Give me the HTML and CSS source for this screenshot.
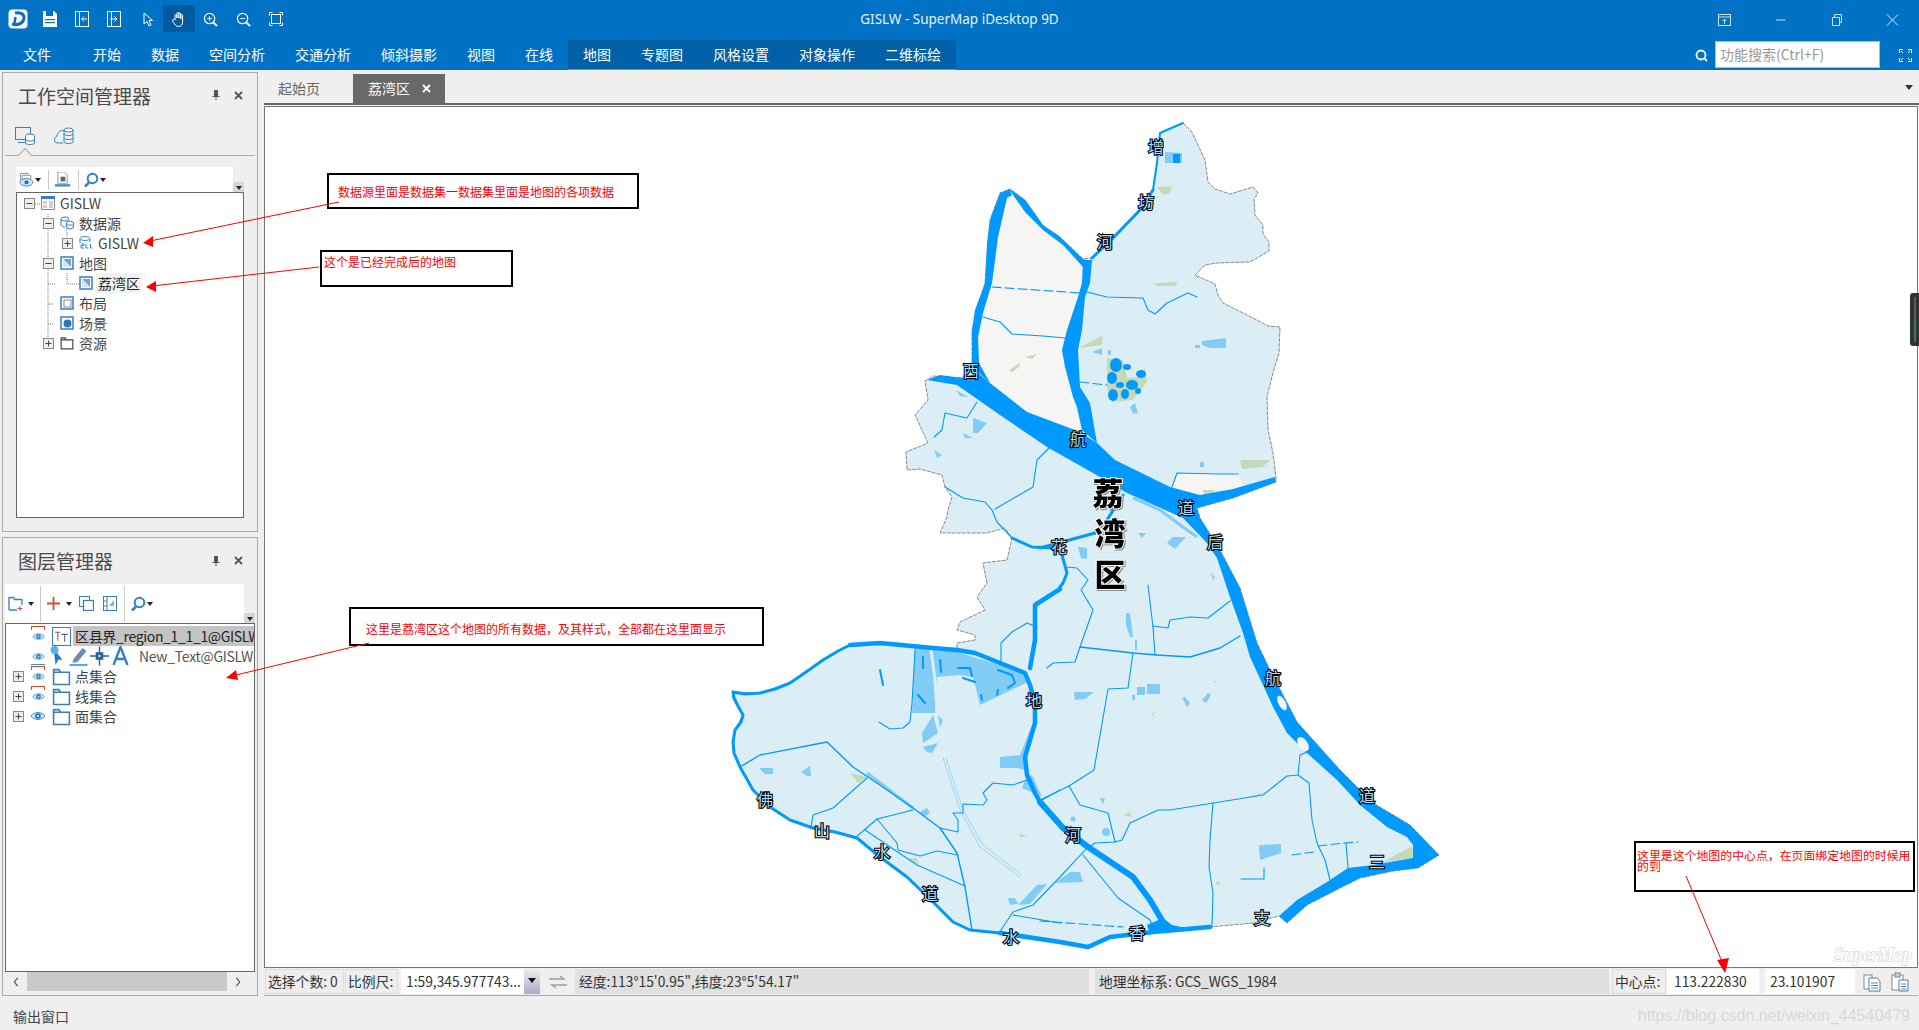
FILE: index.html
```html
<!DOCTYPE html>
<html lang="zh-CN">
<head>
<meta charset="utf-8">
<title>GISLW - SuperMap iDesktop 9D</title>
<link rel="stylesheet" href="styles.css">
</head>
<body>
<svg class="defs" width="0" height="0" aria-hidden="true">
  <symbol id="i-folder" viewBox="0 0 18 18"><path d="M1.5 16.5V2.5h5l1.5 2.5h8.5v11.500zM1.500 5h6.500" fill="none" stroke="currentColor" stroke-width="1.500"/></symbol>
  <symbol id="i-eye" viewBox="0 0 16 10"><path d="M1 5c3-4.500 11-4.500 14 0-3 4.500-11 4.500-14 0z" fill="#cfe6f7" stroke="#3a8bd0"/><circle cx="8" cy="5" r="2.800" fill="#1d76c2"/><circle cx="8" cy="5" r="1" fill="#fff"/></symbol>
  <symbol id="i-map" viewBox="0 0 14 14"><rect x="1" y="1" width="12" height="12" fill="#fff" stroke="#3a7ec0" stroke-width="1.500"/><path d="M3 3h8v8z" fill="#6aa6dc"/><path d="M3 3l8 8H3z" fill="#cfe3f5"/></symbol>
  <symbol id="i-plus" viewBox="0 0 11 11"><rect x=".5" y=".5" width="10" height="10" fill="#eee" stroke="#888"/><path d="M2.500 5.500h6M5.500 2.500v6" stroke="#444"/></symbol>
  <symbol id="i-minus" viewBox="0 0 11 11"><rect x=".5" y=".5" width="10" height="10" fill="#eee" stroke="#888"/><path d="M2.500 5.500h6" stroke="#444"/></symbol>
  <symbol id="i-search" viewBox="0 0 16 16"><circle cx="9.500" cy="6.500" r="4.800" fill="none" stroke="#3a7ec0" stroke-width="2"/><path d="M6 10.500l-4 4" stroke="#3a7ec0" stroke-width="2.500"/></symbol>
  <symbol id="i-doc" viewBox="0 0 18 20"><path d="M1 3h8v14H1z" fill="#fff" stroke="#7a8a9a"/><path d="M6 6h8l3 3v10H6z" fill="#fff" stroke="#5a7a9a"/><path d="M8 11h7M8 13.500h7M8 16h7" stroke="#3a8bd0"/></symbol>
</svg>

<header class="titlebar">
  <div class="qat">
    <svg class="logo" viewBox="0 0 20 20"><rect x="0.500" y="0.500" width="19" height="19" rx="4" fill="#fff"/><path d="M4 15c4 1 11 1 12-6 .5-4-4-6-9-5" fill="none" stroke="#0a6fc0" stroke-width="3"/><path d="M7.500 8l-1 6" stroke="#0a6fc0" stroke-width="2.500"/></svg>
    <svg class="qi save" viewBox="0 0 14 16"><path d="M0 0h11l3 3v13H0z" fill="#fff"/><rect x="3" y="0" width="7" height="5" fill="#0072c6"/><rect x="2" y="8" width="10" height="1.200" fill="#0072c6"/><rect x="2" y="11" width="10" height="1.200" fill="#0072c6"/></svg>
    <svg class="qi imp" viewBox="0 0 14 16"><rect x=".5" y=".5" width="13" height="15" fill="none" stroke="#fff"/><path d="M4.500 0v16M12 8H7m2-2.500L6.500 8 9 10.500" fill="none" stroke="#fff"/></svg>
    <svg class="qi exp" viewBox="0 0 14 16"><rect x=".5" y=".5" width="13" height="15" fill="none" stroke="#fff"/><path d="M4.500 0v16M3 8h7M7.500 5.500L10 8l-2.500 2.500" fill="none" stroke="#fff"/></svg>
    <svg class="qi cur" viewBox="0 0 10 15"><path d="M1 1v11l3-2.500 2 4.500 2-1-2-4.500h3.500z" fill="none" stroke="#fff"/></svg>
    <span class="hand-box"><svg class="hand" viewBox="0 0 14 16"><path d="M3 9V4.500c0-1.500 1.800-1.500 1.800 0V7 2.500c0-1.500 2-1.500 2 0V7 3c0-1.500 2-1.500 2 0v5-3.500c0-1.300 1.800-1.300 1.800 0V11c0 3-2 4.500-4 4.500-3 0-3.500-2-6-5.500-.8-1.500 1-2 2.400-1z" fill="none" stroke="#fff"/></svg></span>
    <svg class="qi zi" viewBox="0 0 16 16"><circle cx="7" cy="7" r="5.500" fill="none" stroke="#fff" stroke-width="1.300"/><path d="M4.500 7h5M7 4.500v5" stroke="#fff"/><path d="M11 11l4 4" stroke="#fff" stroke-width="2"/></svg>
    <svg class="qi zo" viewBox="0 0 16 16"><circle cx="7" cy="7" r="5.500" fill="none" stroke="#fff" stroke-width="1.300"/><path d="M4.500 7h5" stroke="#fff"/><path d="M11 11l4 4" stroke="#fff" stroke-width="2"/></svg>
    <svg class="qi fe" viewBox="0 0 14 14"><path d="M.5 3.500v-3h3M10.500.5h3v3M13.500 10.500v3h-3M3.500 13.500h-3v-3" fill="none" stroke="#fff"/><rect x="2.500" y="2.500" width="9" height="9" fill="none" stroke="#fff"/></svg>
  </div>
  <div class="app-title">GISLW - SuperMap iDesktop 9D</div>
  <div class="winctl">
    <svg class="wc" viewBox="0 0 13 12"><rect x=".5" y=".5" width="12" height="11" fill="none" stroke="#cfe0ee"/><path d="M0 3h13M6.500 10V5M4.500 7l2-2 2 2" fill="none" stroke="#cfe0ee"/></svg>
    <svg class="wc" viewBox="0 0 13 12"><path d="M2 6h9" stroke="#cfe0ee"/></svg>
    <svg class="wc" viewBox="0 0 13 12"><path d="M2.500 3.500h7v8h-7zM4.500 3V.5h7v8h-2" fill="none" stroke="#cfe0ee"/></svg>
    <svg class="wc" viewBox="0 0 13 12"><path d="M1 .5l11 11M12 .5l-11 11" stroke="#dce8f2"/></svg>
  </div>
</header>

<nav class="ribbon">
  <span class="tab-item first">文件</span>
  <span class="tab-item second">开始</span>
  <span class="tab-item">数据</span>
  <span class="tab-item">空间分析</span>
  <span class="tab-item">交通分析</span>
  <span class="tab-item">倾斜摄影</span>
  <span class="tab-item">视图</span>
  <span class="tab-item">在线</span>
  <div class="context-tabs">
    <span class="tab-item">地图</span>
    <span class="tab-item">专题图</span>
    <span class="tab-item">风格设置</span>
    <span class="tab-item">对象操作</span>
    <span class="tab-item">二维标绘</span>
  </div>
  <div class="ribbon-right">
    <svg class="rs-icon" viewBox="0 0 13 13"><circle cx="6" cy="6" r="4.500" fill="none" stroke="#fff" stroke-width="1.800"/><path d="M9 9l3 3" stroke="#fff" stroke-width="1.800"/></svg>
    <div class="search-box">功能搜索(Ctrl+F)</div>
    <svg class="fs-icon" viewBox="0 0 13 13"><path d="M0 .5h4M.5 0v4M2 2l2 2M9 .5h4M12.500 0v4M11 2L9 4M0 12.500h4M.5 9v4M2 11l2-2M9 12.500h4M12.500 9v4M11 11L9 9" fill="none" stroke="#fff"/></svg>
  </div>
</nav>

<main class="workspace">
  <aside class="side">
    <section class="panel panel-ws">
      <div class="panel-head">
        <h2 class="panel-title">工作空间管理器</h2>
        <svg class="pin" viewBox="0 0 8 10"><path d="M2 0h4v6h1.500v1h-3v3h-1V7h-3V6H2z" fill="#555"/></svg>
        <svg class="close" viewBox="0 0 9 9"><path d="M1 1l7 7M8 1L1 8" stroke="#555" stroke-width="1.800"/></svg>
      </div>
      <div class="ws-tabs">
        <svg class="ws-ico" viewBox="0 0 20 18"><rect x=".5" y=".5" width="15" height="12" fill="none" stroke="#3a7ec0"/><path d="M3 15.500h8" stroke="#3a7ec0"/><ellipse cx="15" cy="9" rx="4.500" ry="2" fill="#fff" stroke="#3a7ec0"/><path d="M10.500 9v7c0 2 9 2 9 0V9M10.500 12.500c0 2 9 2 9 0" fill="#fff" stroke="#3a7ec0"/></svg>
        <svg class="ws-ico" viewBox="0 0 20 18"><path d="M9 16H4c-5 0-4-6-1-7 0-4 5-7 8-5" fill="none" stroke="#3a7ec0"/><ellipse cx="14.500" cy="3" rx="4.500" ry="2" fill="#fff" stroke="#3a7ec0"/><path d="M10 3v12c0 2 9 2 9 0V3M10 7c0 2 9 2 9 0M10 11c0 2 9 2 9 0" fill="none" stroke="#3a7ec0"/></svg>
        <i class="notch"></i>
      </div>
      <div class="toolbar tb-ws">
        <svg class="tb-ico w15" viewBox="0 0 16 16"><path d="M1.500 9V1.500h9M3.500 10V3.500h9v4" fill="none" stroke="#888"/><ellipse cx="8" cy="11" rx="7" ry="4" fill="#cfe6f7" stroke="#3a8bd0"/><circle cx="8" cy="11" r="2.200" fill="#1d76c2"/></svg>
        <i class="caret ml1"></i>
        <i class="tb-sep ml7"></i>
        <svg class="tb-ico w15 ml6" viewBox="0 0 16 16"><path d="M3 0h7l3 3v9H3z" fill="#fff" stroke="#8a9ab0"/><rect x="6" y="5" width="5" height="5" fill="#666"/><rect x="0" y="13" width="16" height="2.500" fill="#3a8bd0"/></svg>
        <i class="tb-sep ml8"></i>
        <svg class="tb-ico ml4" viewBox="0 0 16 16"><use href="#i-search"/></svg>
        <i class="caret ml1"></i>
        <i class="overflow"></i>
      </div>
      <div class="tree tree-ws">
        <svg class="tree-lines" viewBox="0 0 228 170"><path d="M18 11h6M31 21v128M31 31h6M31 71h6M31 111h6M31 131h6M31 91h8M50 31v17h6M50 80v11h12" fill="none" stroke="#777" stroke-dasharray="1 1"/></svg>
        <div class="row l0"><svg class="exp-ico"><use href="#i-minus"/></svg><svg class="node" viewBox="0 0 14 14"><rect x=".5" y=".5" width="13" height="13" fill="#fff" stroke="#888"/><rect x="0" y="0" width="14" height="3" fill="#3a7ec0"/><path d="M2 5h4v3H2zM8 5h4v7H8zM2 9h4v3H2z" fill="#ccd"/></svg><span>GISLW</span></div>
        <div class="row l1"><svg class="exp-ico"><use href="#i-minus"/></svg><svg class="node" viewBox="0 0 14 14"><ellipse cx="5" cy="3" rx="4" ry="2" fill="#fff" stroke="#3a7ec0"/><path d="M1 3v6c0 1.500 3 2 4 2" fill="none" stroke="#3a7ec0"/><circle cx="10" cy="9" r="4" fill="#fff" stroke="#3a7ec0"/><path d="M6 9h8" stroke="#3a7ec0"/></svg><span>数据源</span></div>
        <div class="row l2"><svg class="exp-ico"><use href="#i-plus"/></svg><svg class="node" viewBox="0 0 14 14"><ellipse cx="6" cy="2.500" rx="5" ry="2" fill="#fff" stroke="#3a8bd0"/><path d="M1 3v4M11 3v3M2 8h3v1.500H2V12h3M7 8v4h2.500M11.500 8v4h2" fill="none" stroke="#2a8ac0"/></svg><span>GISLW</span></div>
        <div class="row l1"><svg class="exp-ico"><use href="#i-minus"/></svg><svg class="node"><use href="#i-map"/></svg><span>地图</span></div>
        <div class="row l2 selected-row"><i class="exp-gap"></i><svg class="node"><use href="#i-map"/></svg><span class="sel">荔湾区</span></div>
        <div class="row l1"><i class="exp-gap"></i><svg class="node" viewBox="0 0 14 14"><rect x="1" y="1" width="12" height="12" fill="#fff" stroke="#3a7ec0" stroke-width="1.500"/><rect x="4" y="4" width="7" height="7" fill="none" stroke="#888"/></svg><span>布局</span></div>
        <div class="row l1"><i class="exp-gap"></i><svg class="node" viewBox="0 0 14 14"><rect x="1" y="1" width="12" height="12" fill="#fff" stroke="#3a7ec0" stroke-width="1.500"/><circle cx="7.500" cy="7.500" r="4" fill="#2a78c0"/></svg><span>场景</span></div>
        <div class="row l1"><svg class="exp-ico"><use href="#i-plus"/></svg><svg class="node"><use href="#i-folder"/></svg><span>资源</span></div>
      </div>
    </section>

    <section class="panel panel-layer">
      <div class="panel-head head-layer">
        <h2 class="panel-title">图层管理器</h2>
        <svg class="pin" viewBox="0 0 8 10"><path d="M2 0h4v6h1.500v1h-3v3h-1V7h-3V6H2z" fill="#555"/></svg>
        <svg class="close" viewBox="0 0 9 9"><path d="M1 1l7 7M8 1L1 8" stroke="#555" stroke-width="1.800"/></svg>
      </div>
      <div class="toolbar tb-layer">
        <svg class="tb-ico" viewBox="0 0 16 16"><path d="M1 14V1.500h4.500l1 2H14V9M1 14h8" fill="none" stroke="#3a7ec0" stroke-width="1.300"/><path d="M12 10v5M9.500 12.500h5" stroke="#c9543a"/></svg>
        <i class="caret ml4"></i>
        <i class="tb-sep tall ml6"></i>
        <svg class="tb-ico w13 ml6" viewBox="0 0 14 14"><path d="M7 0v14M0 7h14" stroke="#c9543a" stroke-width="2"/></svg>
        <i class="caret ml6"></i>
        <svg class="tb-ico w15 ml7" viewBox="0 0 15 15"><rect x=".5" y=".5" width="10" height="10" fill="none" stroke="#3a7ec0"/><rect x="4.500" y="4.500" width="10" height="10" fill="#fff" stroke="#3a7ec0" stroke-width="1.300"/></svg>
        <svg class="tb-ico w14 ml9" viewBox="0 0 14 15"><rect x=".5" y=".5" width="13" height="14" fill="#fff" stroke="#3a7ec0"/><path d="M4 0v15M0 5h4M0 10h4" stroke="#3a7ec0"/><path d="M6 10l5-6v6z" fill="#9ab"/></svg>
        <i class="tb-sep tall ml7"></i>
        <svg class="tb-ico ml5" viewBox="0 0 16 16"><use href="#i-search"/></svg>
        <i class="caret ml1"></i>
        <i class="overflow"></i>
      </div>
      <div class="tree tree-layer">
        <div class="lrow">
          <i class="exp-gap"></i><span class="vis red"><svg class="eye"><use href="#i-eye"/></svg></span>
          <svg class="lico" viewBox="0 0 18 18"><rect x=".5" y=".5" width="17" height="17" fill="#fff" stroke="#3a7ec0"/><path d="M3 5h5M5.500 5v8M9 7h6M12 7v7" stroke="#666"/></svg>
          <span class="ltext hi">区县界_region_1_1_1@GISLW</span>
        </div>
        <div class="lrow">
          <i class="exp-gap"></i><span class="vis under"><svg class="eye"><use href="#i-eye"/></svg></span>
          <svg class="lico sm" viewBox="0 0 16 20"><path d="M4 2l9 12-4-.5L6 19z" fill="#1b7fd0"/><circle cx="5" cy="4" r="4" fill="#5fb0ea"/></svg>
          <svg class="lico sm" viewBox="0 0 18 20"><path d="M4 13L13 2l4 3-9 11-5 1z" fill="#6d8caa"/><path d="M0 19h18" stroke="#1b8fe0" stroke-width="1.500"/></svg>
          <svg class="lico sm" viewBox="0 0 20 20"><path d="M10 0v20M0 10h20" stroke="#26659c" stroke-width="1.500"/><rect x="6" y="6" width="8" height="8" fill="#26659c"/><rect x="9" y="9" width="2" height="2" fill="#fff"/></svg>
          <svg class="lico sm" viewBox="0 0 16 20"><path d="M1 19L8 1l7 18M4 13h8" fill="none" stroke="#3a7ec0" stroke-width="2.400"/></svg>
          <span class="ltext gap8">New_Text@GISLW</span>
        </div>
        <div class="lrow"><svg class="exp-ico"><use href="#i-plus"/></svg><span class="vis red"><svg class="eye"><use href="#i-eye"/></svg></span><svg class="lico fold"><use href="#i-folder"/></svg><span class="ltext">点集合</span></div>
        <div class="lrow"><svg class="exp-ico"><use href="#i-plus"/></svg><span class="vis red"><svg class="eye"><use href="#i-eye"/></svg></span><svg class="lico fold"><use href="#i-folder"/></svg><span class="ltext">线集合</span></div>
        <div class="lrow"><svg class="exp-ico"><use href="#i-plus"/></svg><span class="vis"><svg class="eye big"><use href="#i-eye"/></svg></span><svg class="lico fold"><use href="#i-folder"/></svg><span class="ltext">面集合</span></div>
      </div>
      <div class="hscroll">
        <svg class="sarrow" viewBox="0 0 8 12"><path d="M6 1L2 6l4 5" fill="none" stroke="#444" stroke-width="1.300"/></svg>
        <i class="thumb"></i>
        <svg class="sarrow" viewBox="0 0 8 12"><path d="M2 1l4 5-4 5" fill="none" stroke="#444" stroke-width="1.300"/></svg>
      </div>
    </section>
  </aside>

  <div class="doc">
    <div class="doc-tabs">
      <span class="doc-tab">起始页</span>
      <span class="doc-tab active">荔湾区<svg class="tab-x" viewBox="0 0 9 9"><path d="M1 1l7 7M8 1L1 8" stroke="#fff" stroke-width="1.800"/></svg></span>
      <i class="tabs-menu"></i>
    </div>
    <div class="map-frame">
      <svg class="map" viewBox="265 107 1652 860">
        <polygon class="land" points="1183,123 1192,132 1205,160 1208,182 1215,189 1230,194 1253,187 1258,193 1254,199 1255,215 1263,225 1263,234 1269,242 1269,251 1250,262 1217,263 1205,265 1195,275 1215,284 1218,295 1223,303 1253,318 1268,326 1280,327 1279,353 1273,373 1267,397 1268,430 1273,453 1276,477 1276,482 1233,498 1197,508 1200,518 1220,550 1240,588 1257,643 1270,670 1297,722 1340,770 1373,803 1410,825 1439,855 1418,868 1393,871 1360,878 1340,888 1307,905 1287,923 1279,916 1253,923 1210,927 1153,933 1110,937 1088,947 1060,943 1000,933 970,930 953,922 933,902 907,877 880,857 857,838 813,828 790,820 770,807 753,790 740,767 733,753 735,730 743,715 732,697 733,692 760,693 790,683 823,660 850,645 880,643 933,648 957,651 957,643 975,640 975,635 957,630 960,622 985,610 977,597 987,583 983,563 1007,560 1012,538 1005,528 987,533 940,533 947,517 948,510 952,497 945,487 942,475 920,469 907,470 906,452 928,443 915,415 928,400 925,381 933,376 962,378 972,363 972,330 985,283 990,220 1000,193 1010,189 1025,200 1043,225 1060,237 1083,259 1092,258 1113,238 1140,210 1153,190 1157,163 1160,133"/>
        <polygon class="pale" points="1010,190 1083,262 1080,300 1062,350 1082,432 1027,412 990,383 975,360 985,283 1000,200"/>
        <polygon class="pale" points="1177,473 1238,474 1245,487 1200,496 1172,488"/>

        <g class="green">
          <polygon points="1157,187 1172,186 1170,193 1163,195"/><polygon points="1154,283 1178,282 1175,286 1157,286"/><polygon points="1193,275 1213,283 1195,277"/><polygon points="1079,348 1103,335 1102,345 1080,348"/><polygon points="1107,358 1123,360 1126,373 1127,378 1137,377 1145,368 1147,382 1133,400 1112,402 1107,387"/><polygon points="1009,371 1019,363 1020,366 1012,372"/><polygon points="1025,357 1037,354 1032,359"/><polygon points="1240,460 1270,460 1263,467 1242,469"/><polygon points="1203,490 1215,490 1212,495 1204,495"/><polygon points="1383,862 1412,846 1414,858"/><polygon points="850,773 867,777 858,783"/><polygon points="907,858 917,858 919,865"/><polygon points="1020,833 1027,837 1020,837"/><polygon points="1123,815 1130,812 1132,817"/><polygon points="1247,797 1265,792 1260,795"/><polygon points="1151,715 1156,711 1152,717"/><polygon points="1214,681 1217,681 1215,683"/><polygon points="1215,882 1221,882 1218,886"/>
        </g>
        <g class="lake">
          <polygon points="1165,152 1182,153 1182,163 1165,163"/><polygon points="1092,352 1102,348 1102,355"/><rect x="1108" y="350" width="3" height="5"/><polygon points="1202,341 1226,338 1226,348 1210,348 1202,345"/><rect x="1195" y="345" width="5" height="3"/><polygon points="1130,407 1135,403 1138,413 1133,414"/><polygon points="956,390 968,397 960,396"/><polygon points="973,418 987,423 978,433 973,433"/><polygon points="963,433 973,438 965,438"/><polygon points="934,450 942,455 937,458"/>
          <polygon points="915,648 933,649 957,652 1025,673 1028,682 980,705 977,693 973,677 960,675 937,677 935,713 912,713"/>
          <polygon points="933,715 938,733 923,743 922,733"/><polygon points="923,747 938,743 932,753 927,752"/><polygon points="938,715 943,720 940,728"/><polygon points="1000,757 1020,755 1032,725 1025,770 1018,768 1000,768"/><polygon points="1032,775 1042,797 1022,788 1025,780"/><polygon points="759,768 773,768 773,774 765,774"/><polygon points="801,772 810,766 811,776 807,776"/><polygon points="920,812 927,808 930,813 924,817"/><polygon points="1008,898 1015,898 1018,904 1010,905"/><polygon points="1018,905 1037,885 1047,884 1030,904"/>
          <polygon points="1078,547 1087,548 1087,559 1081,558"/><polygon points="1074,692 1094,692 1085,699 1075,700"/><rect x="1137" y="687" width="8" height="8"/><rect x="1147" y="684" width="13" height="10"/><rect x="1132" y="695" width="3" height="5"/><polygon points="1182,698 1185,697 1190,703 1187,707"/><polygon points="1202,700 1208,693 1211,695 1206,703"/><polygon points="1167,543 1173,537 1186,537 1175,549"/><polygon points="1138,533 1146,533 1142,538"/><polygon points="1126,613 1130,613 1133,637 1130,637 1126,625"/><rect x="1135" y="640" width="2" height="10"/><polygon points="1259,845 1281,844 1281,853 1260,860"/><polygon points="1055,883 1070,872 1080,872 1083,882"/><circle cx="1106" cy="832" r="4"/><polygon points="1100,798 1105,798 1103,805"/><circle cx="1073" cy="819" r="2.500"/><polygon points="1211,572 1215,578 1213,580"/><rect x="1200" y="462" width="4" height="5"/>
        </g>
        <g class="lake-line">
          <polyline points="867,773 913,808"/><polyline points="1133,498 1160,510 1183,527 1197,537"/>
        </g>
        <polyline class="gap-strip" points="931,650 935,680 937,712"/>
        <polyline class="rail" points="943,758 960,810 980,847 1020,877"/><polyline class="rail" points="946,758 963,810 983,845 1022,875"/>

        <g class="water">
          <rect x="1173" y="154" width="7" height="9"/>
          <polygon points="927,380 940,375 962,378 978,373 990,383 1027,412 1080,432 1097,443 1115,460 1170,487 1200,495 1233,489 1275,477 1276,482 1233,498 1197,508 1200,518 1220,550 1240,588 1257,643 1270,670 1297,722 1340,770 1373,803 1410,825 1439,855 1418,868 1393,871 1360,878 1340,888 1307,905 1287,923 1279,916 1297,900 1327,882 1348,868 1373,865 1413,858 1413,845 1407,837 1387,827 1360,805 1337,780 1307,753 1287,733 1273,707 1263,685 1250,657 1243,633 1230,597 1217,558 1207,543 1183,518 1127,493 1093,473 1047,447 1000,415 957,385"/>
          <polygon points="1083,260 1082,283 1078,297 1067,330 1062,350 1065,367 1073,397 1077,407 1082,430 1097,443 1090,403 1080,387 1078,350 1082,330 1085,297 1090,283 1092,260"/>
          <polygon points="1000,193 990,220 987,243 985,283 975,310 972,330 972,363 979,373 990,383 979,363 978,337 983,313 992,283 998,237 1007,198 1012,195 1010,189"/>
          <polygon points="1010,189 1025,200 1043,225 1060,237 1083,259 1092,262 1083,267 1063,245 1043,230 1025,212 1013,195"/>
          <polygon points="1147,925 1163,918 1172,925 1190,929 1150,934"/>
          <ellipse cx="1116" cy="365" rx="6" ry="7"/><ellipse cx="1127" cy="367" rx="4" ry="3"/><ellipse cx="1112" cy="378" rx="5" ry="6"/><ellipse cx="1120" cy="385" rx="4" ry="3"/><ellipse cx="1141" cy="374" rx="5" ry="4"/><ellipse cx="1132" cy="385" rx="6" ry="5"/><ellipse cx="1113" cy="395" rx="5" ry="6"/><ellipse cx="1125" cy="394" rx="4" ry="5"/><ellipse cx="1138" cy="391" rx="3" ry="3"/>
        </g>
        <g class="river">
          <polyline class="w3" points="1092,258 1113,238 1140,210 1153,190"/>
          <polyline class="w2" points="1153,190 1157,163 1160,133 1183,123"/>
          <polyline class="w4" points="957,650 975,653 1000,663 1025,673 1030,685 1035,703 1035,723 1030,740 1025,757 1027,775 1035,793 1040,802"/>
          <polyline class="w6" points="1040,802 1063,828 1088,847 1133,877 1150,900 1163,922"/>
          <polyline class="w4" points="850,645 880,643 933,648 957,650"/>
          <polyline class="w3" points="850,645 838,651 823,660 806,672 790,683 775,689 760,693 745,694 733,692 734,698 738,706 743,715 741,722 735,730 733,742 734,753 740,767 753,790 770,807 790,820 813,828 835,832 857,838 880,857 907,877 933,902 953,922 970,930 1000,933"/>
          <polyline class="w4" points="1000,933 1060,942 1088,947 1110,937 1153,932 1210,927"/>
          <polyline class="w3" points="1040,548 1095,533"/>
          <polyline class="w3" points="1012,538 1032,547 1060,548 1067,573 1063,583 1060,587"/>
          <polyline class="w4" points="1030,668 1035,640 1035,605 1060,589"/>
          <polyline class="w3" points="1095,533 1107,520 1123,495"/>
          <polyline class="w1" points="1172,487 1177,473 1220,474 1238,474"/>
          <polyline class="w1" points="983,317 1000,322 1012,334 1043,336 1065,338"/>
          <polyline class="w1" points="1087,292 1107,297 1143,298 1148,310 1155,314 1167,303 1188,293 1197,297"/>
          <polyline class="w1" points="977,402 967,418 945,413 942,430 934,437"/>
          <polyline class="w1" points="1050,447 1037,460 1033,487 995,509"/>
          <polyline class="w1" points="945,487 963,498 985,502 992,510 997,522 1012,538"/>
          <polyline class="w1" points="1001,663 1001,643 1012,632 1027,623 1037,627"/>
          <polyline class="w1" points="879,722 890,729 903,728 910,722 912,703 915,650"/>
          <polyline class="w15" points="740,767 760,755 827,742 853,767 877,783 913,808 940,828 957,853 965,887 972,930"/>
          <polyline class="w1" points="867,778 833,808 813,815 811,828"/>
          <polyline class="w1" points="855,838 877,819 913,810"/>
          <polyline class="w1" points="877,819 897,843 898,850 920,856 937,851 958,855"/>
          <polyline class="w1" points="865,830 917,865 965,886"/>
          <polyline class="w1" points="999,933 1013,912 1033,905 1060,877 1087,848"/>
          <polyline class="w1" points="1013,915 1060,923"/>
          <polyline class="w1" points="940,828 958,832 958,820 953,813 963,813 963,804 983,805 987,800 983,793 993,783 1013,785 1027,780"/>
          <polyline class="w1" points="1042,800 1060,790"/>
          <polyline class="w1" points="1067,567 1077,568 1088,580 1081,590 1093,610 1080,647 1075,662 1053,663 1047,668"/>
          <polyline class="w15" points="1080,647 1133,653 1157,655 1190,657 1220,648 1240,636"/>
          <polyline class="w1" points="1148,585 1153,627 1155,655"/>
          <polyline class="w1" points="1153,626 1168,628 1170,620 1190,617 1208,618 1230,601"/>
          <polyline class="w1" points="1133,653 1128,688 1108,689 1094,770 1069,786 1040,800"/>
          <polyline class="w1" points="1069,786 1080,805 1108,813 1115,842 1095,843 1088,848"/>
          <polyline class="w1" points="1115,842 1122,840 1130,823 1158,810 1170,810 1263,795 1287,776 1298,775 1300,755 1307,752"/>
          <polyline class="w1" points="1213,803 1210,840 1209,867 1213,893 1212,927"/>
          <polyline class="w1" points="1298,775 1309,783 1312,820 1317,843 1325,860 1330,880"/>
          <polyline class="w1" points="1241,879 1264,879 1264,868"/>
          <polyline class="w1" points="1083,855 1118,898 1150,920 1153,928"/>
          <polyline class="w1 dash" points="992,287 1080,293"/>
          <polyline class="w1 dash" points="1080,382 1107,385"/>
          <polyline class="w1 dash" points="1040,921 1123,927"/>
          <polyline class="w1 dash" points="1292,855 1314,852"/>
          <polyline class="w1 dash" points="1318,846 1345,843 1358,842"/>
          <polyline class="w1" points="1346,843 1348,868"/>
          <polyline class="w2" points="880,670 883,685"/><polyline class="w2" points="923,657 923,668"/><polyline class="w2" points="918,695 925,703"/><polyline class="w2" points="940,660 941,672"/><polyline class="w2" points="958,668 970,668 972,676"/><polyline class="w2" points="963,678 975,682"/><polyline class="w2" points="998,670 1012,675 1015,683 1008,688"/><polyline class="w2" points="981,695 982,700"/><polyline class="w2" points="998,690 997,695"/>
        </g>
        <g>
          <ellipse class="island" cx="1282" cy="703" rx="3.500" ry="8" transform="rotate(-28 1282 703)"/>
          <ellipse class="island" cx="1303" cy="744" rx="4.500" ry="8" transform="rotate(-35 1303 744)"/>
        </g>
        <g class="lb">
          <text x="1156" y="153">增</text><text x="1146" y="208">坊</text><text x="1105" y="248">河</text><text x="971" y="377">西</text><text x="1078" y="445">航</text><text x="1186" y="514">道</text><text x="1215" y="548">后</text><text x="1273" y="684">航</text><text x="1367" y="802">道</text><text x="1377" y="868">三</text><text x="1262" y="924">支</text><text x="1137" y="939">香</text><text x="1073" y="841">河</text><text x="1059" y="553">花</text><text x="1034" y="707">地</text><text x="1011" y="943">水</text><text x="930" y="900">道</text><text x="882" y="858">水</text><text x="822" y="837">山</text><text x="765" y="806">佛</text>
        </g>
        <g class="big">
          <text x="1108" y="505">荔</text><text x="1110" y="545">湾</text><text x="1110" y="586">区</text>
        </g>
        <text class="sm-mark" x="1834" y="961">SuperMap</text>
      </svg>
      <div class="scrub"></div>
    </div>
    <div class="status">
      <span class="cell c-sel">选择个数: 0</span>
      <span class="cell c-scale">比例尺:</span>
      <span class="combo">1:59,345.977743...<i class="combo-btn"></i></span>
      <svg class="swap" viewBox="0 0 18 14"><path d="M0 4h15l-4-3M18 10H3l4 3" fill="none" stroke="#9aa0a8" stroke-width="1.500"/></svg>
      <span class="field f-coord">经度:113°15'0.95",纬度:23°5'54.17"</span>
      <span class="field f-crs">地理坐标系: GCS_WGS_1984</span>
      <span class="cell c-center">中心点:</span>
      <span class="val v1">113.222830</span>
      <span class="val v2">23.101907</span>
      <svg class="st-ico first-ico"><use href="#i-doc"/></svg>
      <svg class="st-ico" viewBox="0 0 18 20"><rect x="1" y="3" width="11" height="15" fill="#fff" stroke="#7a8a9a"/><rect x="4" y="1" width="5" height="4" fill="#ccd" stroke="#7a8a9a"/><path d="M8 8h9v11H8z" fill="#fff" stroke="#5a7a9a"/><path d="M10 12h5M10 14.500h5M10 17h5" stroke="#3a8bd0"/></svg>
    </div>
  </div>
</main>

<footer class="output"><span>输出窗口</span><span class="blog-mark">https://blog.csdn.net/weixin_44540479</span></footer>

<div class="note n1">数据源里面是数据集一数据集里面是地图的各项数据</div>
<div class="note n2">这个是已经完成后的地图</div>
<div class="note n3">这里是荔湾区这个地图的所有数据，及其样式，全部都在这里面显示</div>
<div class="note n4">这里是这个地图的中心点，在页面绑定地图的时候用的到</div>
<svg class="arrows" viewBox="0 0 1919 1030">
  <g class="arrow">
    <line x1="339" y1="202" x2="150" y2="241"/><polygon points="143,243 153,236 153,247"/>
    <line x1="319" y1="267" x2="152" y2="286"/><polygon points="146,287 156,281 156,292"/>
    <line x1="369" y1="643" x2="232" y2="676"/><polygon points="226,678 236,670 238,680"/>
    <line x1="1686" y1="876" x2="1723" y2="964"/><polygon points="1725,973 1717,960 1729,958"/>
  </g>
</svg>
</body>
</html>
```

FILE: styles.css
```css
* { box-sizing: border-box; }
html, body { margin: 0; height: 100%; }
body {
  position: relative;
  width: 1919px;
  height: 1030px;
  overflow: hidden;
  background: #efefef;
  color: #444;
  font-family: "Noto Sans CJK SC", "Liberation Sans", sans-serif;
  font-size: 14px;
  display: flex;
  flex-direction: column;
}
i { display: block; font-style: normal; }
.defs { position: absolute; }

/* Title bar */
.titlebar {
  height: 40px;
  flex: none;
  background: #0072c6;
  display: flex;
  align-items: flex-start;
  position: relative;
}
.qat { display: flex; align-items: center; height: 40px; padding: 0 0 0 8px; position: relative; top: -1px; }
.logo { width: 20px; height: 20px; }
.qi { width: 14px; height: 16px; flex: none; }
.save { margin-left: 15px; }
.imp { margin-left: 18px; }
.exp { margin-left: 18px; }
.cur { margin-left: 22px; width: 10px; height: 15px; }
.hand-box { width: 32px; height: 27px; margin-left: 10px; background: #005a9e; display: flex; align-items: center; justify-content: center; position: relative; top: -.5px; }
.hand { width: 14px; height: 16px; }
.zi { margin-left: 8px; width: 15px; height: 15px; }
.zo { margin-left: 18px; width: 15px; height: 15px; }
.fe { margin-left: 18px; width: 14px; height: 14px; }
.app-title {
  position: absolute;
  left: 0; right: 0; top: 9px;
  text-align: center;
  font: 13.5px/20px "Noto Sans", "Liberation Sans", sans-serif;
  color: #e6f0f8;
}
.winctl { margin-left: auto; display: flex; gap: 43px; padding: 14px 20px 0 0; position: relative; }
.wc { width: 13px; height: 12px; }

/* Ribbon */
.ribbon {
  height: 30px;
  flex: none;
  background: #0072c6;
  display: flex;
  align-items: stretch;
  padding-left: 8px;
  color: #fff;
}
.tab-item { padding: 0 15px; line-height: 28px; white-space: nowrap; }
.second { margin-left: 12px; }
.context-tabs { display: flex; background: #0060a8; border-bottom: 1px solid #4d9ad8; }
.ribbon-right { margin-left: auto; display: flex; align-items: center; padding-right: 7px; }
.rs-icon { width: 13px; height: 13px; }
.search-box {
  width: 165px; height: 27px; margin: 0 19px 1px 7px;
  background: #fff; border: 1px solid #b5bdc4;
  color: #999; font-size: 14px; line-height: 24px; padding-left: 4px;
}
.fs-icon { width: 13px; height: 13px; }

/* Layout */
.workspace { flex: none; height: 926px; display: flex; }
.side { width: 262px; flex: none; padding: 2px 0 0 2px; display: flex; flex-direction: column; gap: 5px; }
.panel { width: 256px; border: 1px solid #ababab; background: #efefef; }
.panel-ws { height: 460px; }
.panel-layer { height: 459px; }
.panel-head { height: 49px; display: flex; align-items: center; padding: 0 14px 5px 15px; }
.head-layer { height: 46px; padding-bottom: 1px; }
.panel-title { margin: 0; font-size: 19px; font-weight: 400; color: #4a4a4a; flex: 1; }
.pin { width: 8px; height: 10px; margin-right: 14px; }
.close { width: 9px; height: 9px; }

.ws-tabs {
  height: 34px; margin: 0 2px 11px;
  border-bottom: 1px solid #ababab;
  display: flex; gap: 19px; padding: 5px 0 0 10px;
  position: relative;
}
.ws-ico { width: 20px; height: 18px; }
.notch {
  position: absolute; left: 15px; bottom: -5px;
  width: 10px; height: 10px;
  background: #efefef;
  border: solid #ababab; border-width: 1px 0 0 1px;
  transform: rotate(45deg);
}

.toolbar { display: flex; align-items: center; position: relative; background: #fff; }
.tb-ws { height: 25px; width: 228px; margin-left: 13px; padding-left: 3px; background: linear-gradient(90deg, #fff 0 217px, #efefef 217px); }
.tb-layer { height: 39px; width: 250px; margin-left: 2px; padding-left: 3px; background: linear-gradient(90deg, #fff 0 239px, #efefef 239px); }
.tb-ico { width: 16px; height: 16px; flex: none; }
.tb-ico.w15 { width: 15px; height: 15px; }
.tb-ico.w14 { width: 14px; height: 15px; }
.tb-ico.w13 { width: 13px; height: 13px; }
.caret { width: 6px; height: 0; flex: none; border: 3px solid transparent; border-top: 4px solid #222; border-bottom: 0; }
.tb-sep { width: 1px; height: 20px; background: #c9c9c9; flex: none; }
.tb-sep.tall { height: 36px; }
.ml1 { margin-left: 1px; }
.ml4 { margin-left: 4px; }
.ml5 { margin-left: 5px; }
.ml6 { margin-left: 6px; }
.ml7 { margin-left: 7px; }
.ml8 { margin-left: 8px; }
.ml9 { margin-left: 9px; }
.overflow {
  position: absolute; right: 0; bottom: 0;
  width: 11px; height: 10px;
  background: #d6d6d6;
}
.overflow::after {
  content: ""; position: absolute; left: 3px; top: 4px;
  border: 3px solid transparent; border-top: 4px solid #222; border-bottom: 0;
}

.tree { background: #fff; border: 1px solid #666; position: relative; overflow: hidden; }
.tree-ws { width: 228px; height: 326px; margin-left: 13px; }
.tree-lines { position: absolute; left: 0; top: 0; width: 228px; height: 170px; }
.row { height: 20px; display: flex; align-items: center; position: relative; white-space: nowrap; }
.l0 { padding-left: 7px; }
.l1 { padding-left: 26px; }
.l2 { padding-left: 45px; }
.exp-ico { width: 11px; height: 11px; flex: none; }
.exp-gap { width: 11px; height: 11px; flex: none; }
.node { width: 14px; height: 14px; flex: none; margin: 0 5px 0 6px; }
.sel { background: #f2f2f2; padding: 0 2px; margin-left: -2px; color: #222; line-height: 20px; }

.tree-layer { width: 250px; height: 349px; margin-left: 2px; padding-top: 2px; }
.lrow { height: 20px; display: flex; align-items: center; padding-left: 7px; white-space: nowrap; }
.vis { width: 16px; height: 18px; margin-left: 6px; display: flex; align-items: center; justify-content: center; flex: none; position: relative; }
.vis.red::before { content: ""; position: absolute; left: 1px; right: 1px; top: -1px; height: 3px; border: 1px solid #e0472b; border-bottom: 0; }
.vis.under::after { content: ""; position: absolute; left: 1px; right: 1px; bottom: 0; height: 1px; background: #3a8bd0; }
.eye { width: 13px; height: 9px; }
.eye.big { width: 18px; height: 12px; }
.lico { width: 19px; height: 19px; flex: none; margin-left: 6px; color: #3a7ec0; }
.lico.fold { width: 19px; height: 19px; }
.lico.sm { width: 19px; height: 20px; margin-left: 2px; }
.ltext { margin-left: 4px; }
.ltext.gap8 { margin-left: 9px; color: #555; letter-spacing: -.3px; }
.ltext.hi { background: #c4c4c4; color: #222; flex: 1; line-height: 20px; padding-left: 2px; margin-left: 2px; overflow: hidden; letter-spacing: -.34px; }
.hscroll { width: 250px; height: 19px; margin-left: 2px; display: flex; align-items: center; background: #efefef; }
.sarrow { width: 22px; height: 10px; flex: none; }
.thumb { width: 200px; height: 19px; background: #c9c9c9; }

/* Document area */
.doc { width: 1657px; flex: none; padding-left: 2px; display: flex; flex-direction: column; }
.doc-tabs {
  height: 35px; display: flex; align-items: stretch; padding-top: 4px;
  border-bottom: 2px solid #666; position: relative;
}
.doc-tab { width: 89px; padding-left: 14px; line-height: 29px; color: #666; }
.doc-tab.active { width: 92px; padding-left: 15px; background: #696969; color: #fff; display: flex; align-items: center; }
.tab-x { width: 9px; height: 9px; margin-left: 12px; }
.tabs-menu {
  position: absolute; right: 6px; top: 15px;
  border: 4px solid transparent; border-top: 5px solid #333; border-bottom: 0;
}
.map-frame { margin-top: 1px; width: 1654px; height: 862px; border: 1px solid #777; background: #fff; position: relative; overflow: visible; }
.map { display: block; width: 1652px; height: 860px; }
.scrub {
  position: absolute; right: -2px; top: 186px;
  width: 9px; height: 53px;
  background: #2f3338;
  border-radius: 3px 0 0 3px;
}
.scrub::after {
  content: ""; position: absolute; left: 4px; top: 4px; width: 2px; height: 45px;
  background: linear-gradient(#6b5a3a 0 50%, #3f7a45 50%);
}

.land { fill: #dceef5; stroke: #8a8a8a; stroke-width: 1; stroke-dasharray: 4 1; }
.pale { fill: #f5f5f3; }
.green polygon { fill: #c3d9b8; }
.lake polygon, .lake rect, .lake circle { fill: #80ccf5; }
.lake-line polyline { fill: none; stroke: #80ccf5; stroke-width: 3; }
.gap-strip { fill: none; stroke: #dceef5; stroke-width: 3; }
.rail { fill: none; stroke: #9ad6f5; stroke-width: 1; }
.water polygon, .water ellipse, .water rect { fill: #0099ff; }
.river polyline { fill: none; stroke: #0099ff; stroke-linejoin: round; stroke-linecap: round; }
.river .w1 { stroke-width: 1.1; }
.river .w15 { stroke-width: 1.4; }
.river .w2 { stroke-width: 2; }
.river .w3 { stroke-width: 3; }
.river .w4 { stroke-width: 4.5; }
.river .w6 { stroke-width: 6; }
.river .dash { stroke-dasharray: 9 4; }
.island { fill: #f2f6f8; }
.lb text {
  font: 400 16px "Noto Sans CJK SC", sans-serif;
  text-anchor: middle;
  fill: #a9defa;
  stroke: #000;
  stroke-width: 2.2px;
  paint-order: stroke;
}
.big text {
  font: 900 31px "Noto Sans CJK SC", sans-serif;
  text-anchor: middle;
  fill: #000;
  stroke: #fff;
  stroke-width: 2px;
  paint-order: stroke;
  filter: drop-shadow(1px 1px 0 #888);
}
.sm-mark {
  font: italic 700 18px "Liberation Serif", serif;
  fill: #fff;
  stroke: #c9c9c9;
  stroke-width: 1px;
  paint-order: stroke;
}

/* Status bar */
.status {
  height: 28px; width: 1654px; display: flex; align-items: center;
  border-bottom: 1px solid #aaa; padding: 1px 0 1px 1px;
  font-size: 13.8px; color: #333; white-space: nowrap;
}
.cell { height: 25px; line-height: 23px; border: 1px solid #dcdcdc; background: #eee; padding-left: 2px; flex: none; }
.c-sel { width: 79px; }
.c-scale { width: 53px; margin-left: 1px; }
.combo { width: 139px; height: 25px; margin-left: 3px; background: #fff; line-height: 25px; padding-left: 5px; position: relative; flex: none; overflow: hidden; }
.combo-btn { position: absolute; right: 0; top: 0; width: 16px; height: 25px; background: linear-gradient(#eee, #aaaac6); }
.combo-btn::after { content: ""; position: absolute; left: 4px; top: 9px; border: 4px solid transparent; border-top: 5px solid #111; border-bottom: 0; }
.swap { width: 18px; height: 14px; margin: 0 8px 0 9px; flex: none; }
.field { height: 25px; line-height: 25px; background: #e0e0e0; padding-left: 4px; flex: none; }
.f-coord { width: 514px; }
.f-crs { width: 514px; margin-left: 6px; }
.c-center { width: 54px; margin-left: 3px; }
.val { height: 25px; line-height: 25px; background: #fff; flex: none; padding-left: 5px; }
.v1 { width: 92px; margin-left: 1px; padding-left: 7px; }
.v2 { width: 90px; margin-left: 6px; }
.st-ico { width: 18px; height: 20px; margin-left: 10px; flex: none; }
.st-ico.first-ico { margin-left: 8px; }

/* Output */
.output { height: 34px; flex: none; display: flex; align-items: center; justify-content: space-between; padding: 5px 9px 0 13px; font-size: 14px; color: #444; }
.blog-mark { font: 16px "Liberation Sans", sans-serif; color: #d8d8d8; }

/* Annotations */
.note {
  position: absolute;
  background: #fff;
  border: 2px solid #000;
  color: #f00;
  font-size: 12px;
  line-height: 13px;
}
.n1 { left: 327px; top: 173px; width: 312px; height: 36px; padding: 10px 0 0 9px; }
.n2 { left: 320px; top: 250px; width: 193px; height: 37px; padding: 3px 0 0 2px; }
.n3 { left: 349px; top: 607px; width: 415px; height: 39px; padding: 13px 0 0 15px; }
.n4 { left: 1634px; top: 841px; width: 281px; height: 51px; padding: 6px 0 0 1px; line-height: 11px; font-size: 11.9px; }
.arrows { position: absolute; left: 0; top: 0; width: 1919px; height: 1030px; pointer-events: none; }
.arrow line { stroke: #f00; stroke-width: 1; }
.arrow polygon { fill: #f00; }
```
